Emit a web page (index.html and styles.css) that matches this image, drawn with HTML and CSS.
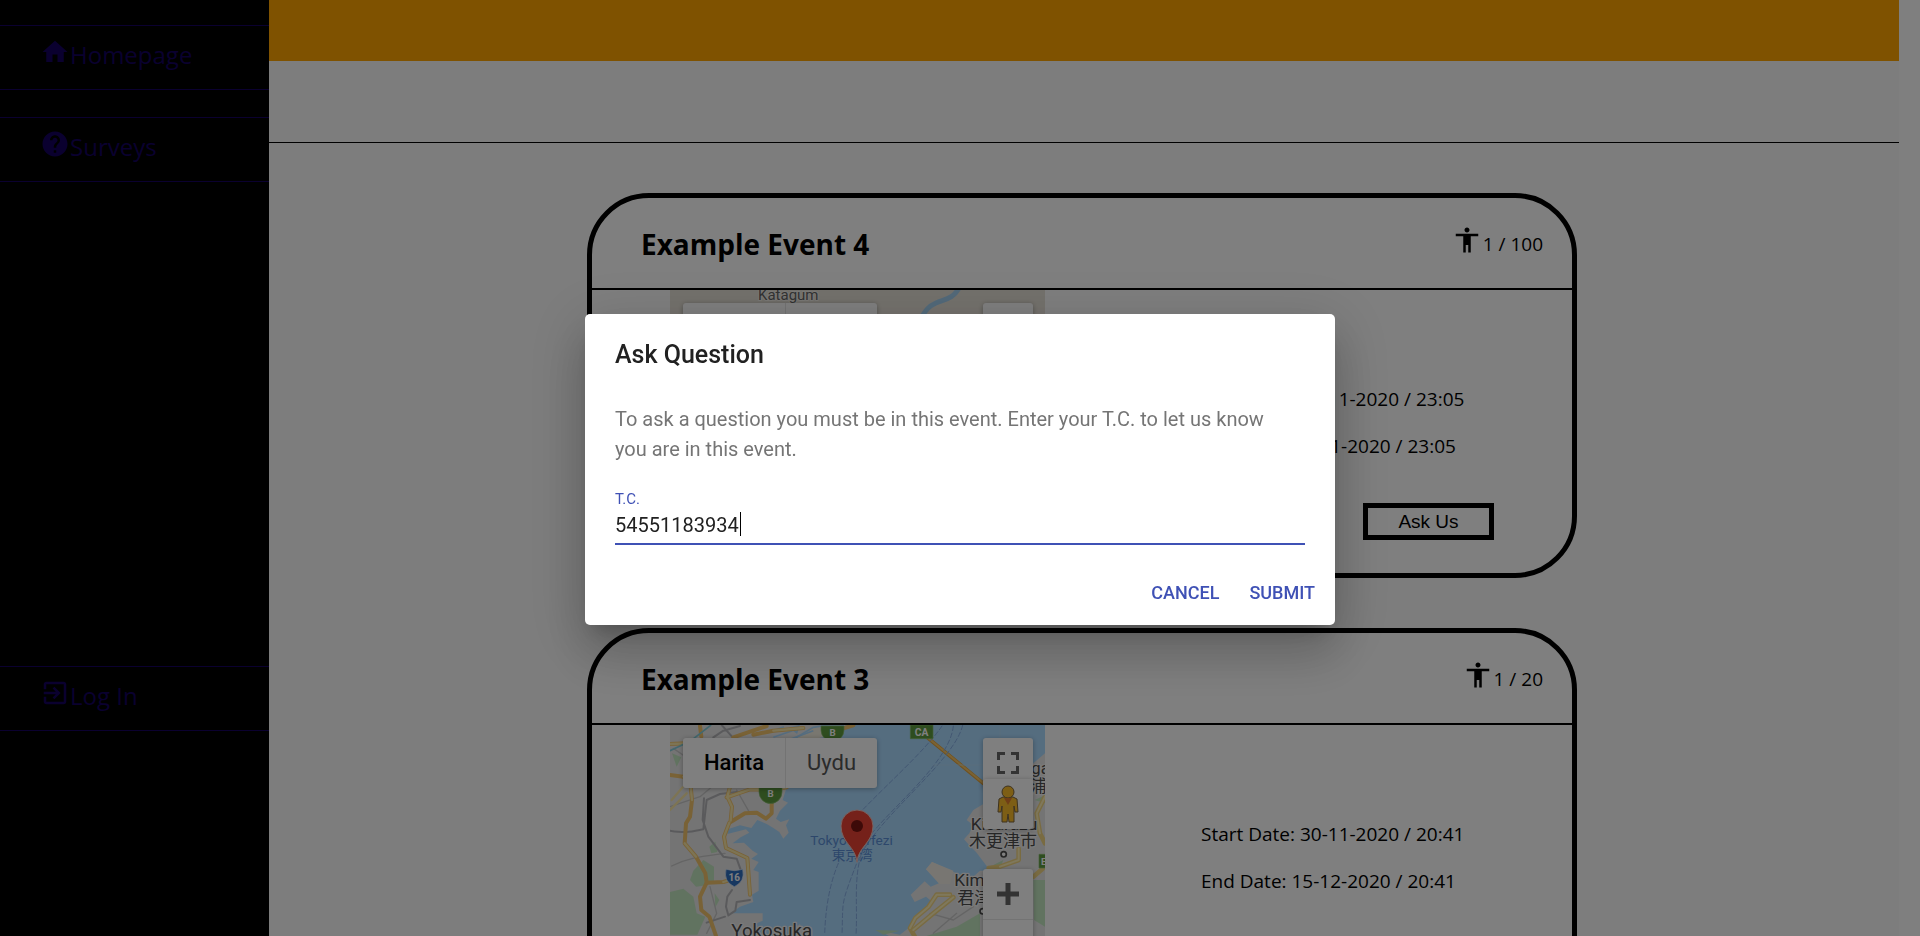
FILE: index.html
```html
<!DOCTYPE html>
<html lang="en">
<head>
<meta charset="utf-8">
<title>Events</title>
<link rel="stylesheet" href="styles.css">
</head>
<body>
<div class="app">
  <nav class="sidebar">
    <a class="nav-item" href="#home"><svg class="icon" viewBox="0 0 24 24"><path d="M10 20v-6h4v6h5v-8h3L12 3 2 12h3v8z"/></svg><span>Homepage</span></a>
    <a class="nav-item" href="#surveys"><svg class="icon" viewBox="0 0 24 24"><path d="M12 2C6.48 2 2 6.48 2 12s4.48 10 10 10 10-4.48 10-10S17.52 2 12 2zm1 17h-2v-2h2v2zm2.07-7.75l-.9.92C13.45 12.9 13 13.5 13 15h-2v-.5c0-1.1.45-2.1 1.17-2.83l1.24-1.26c.37-.36.59-.86.59-1.41 0-1.1-.9-2-2-2s-2 .9-2 2H8c0-2.21 1.79-4 4-4s4 1.79 4 4c0 .88-.36 1.68-.93 2.25z"/></svg><span>Surveys</span></a>
    <a class="nav-item nav-login" href="#login"><svg class="icon" viewBox="0 0 24 24"><path d="M10.09 15.59L11.5 17l5-5-5-5-1.41 1.41L12.67 11H3v2h9.67l-2.58 2.59zM19 3H5c-1.11 0-2 .9-2 2v4h2V5h14v14H5v-4H3v4c0 1.1.89 2 2 2h14c1.1 0 2-.9 2-2V5c0-1.1-.9-2-2-2z"/></svg><span>Log In</span></a>
  </nav>

  <div class="page">
    <header class="topbar"></header>
    <div class="toolbar"></div>
    <main class="events">

      <article class="card">
        <header class="card-head">
          <h2 class="card-title">Example Event 4</h2>
          <div class="quota"><svg class="icon" viewBox="0 0 24 24"><path d="M12 2c1.1 0 2 .9 2 2s-.9 2-2 2-2-.9-2-2 .9-2 2-2zm9 7h-6v13h-2v-6h-2v6H9V9H3V7h18v2z"/></svg><span>1 / 100</span></div>
        </header>
        <div class="card-body">
          <div class="map">
            <svg class="map-art" viewBox="0 0 375 283">
              <rect width="375" height="283" fill="#e9e4da"/>
              <path d="M289 -2C283 9 275 9 266 13S255 22 251 28S236 60 220 74" fill="none" stroke="#a6d4f5" stroke-width="5"/>
              <text class="place" x="88" y="10" font-size="15">Katagum</text>
            </svg>
            <div class="map-types"><button class="map-type map-type-on" type="button">Harita</button><button class="map-type" type="button">Uydu</button></div>
            <button class="map-tool tool-full" type="button" aria-label="Fullscreen"></button>
          </div>
          <div class="details">
            <p class="date">Start Date: 30-11-2020 / 23:05</p>
            <p class="date">End Date: 30-11-2020 / 23:05</p>
            <button class="ask" type="button">Ask Us</button>
          </div>
        </div>
      </article>

      <article class="card">
        <header class="card-head">
          <h2 class="card-title">Example Event 3</h2>
          <div class="quota"><svg class="icon" viewBox="0 0 24 24"><path d="M12 2c1.1 0 2 .9 2 2s-.9 2-2 2-2-.9-2-2 .9-2 2-2zm9 7h-6v13h-2v-6h-2v6H9V9H3V7h18v2z"/></svg><span>1 / 20</span></div>
        </header>
        <div class="card-body">
          <div class="map">
            <svg class="map-art" viewBox="90 75 1125 849">
              <rect x="90" y="75" width="1125" height="849" fill="#aadaff"/>
              <!-- west shore -->
              <path d="M90 75H620L590 88L560 104L500 112L470 135L450 200L440 262L428 300L444 308L420 332L408 356L422 366L448 358L438 376L446 398L430 416L418 396L400 384L380 372L352 360L334 384L300 376L264 388L262 402L318 388L328 398L302 412L278 430L312 428L338 452L354 462L334 476L356 486L340 510L356 516V572L336 584L340 606L300 620L272 640H368V662L345 672L360 690L352 708L390 702L400 720L440 730L455 690L480 672L492 702L500 760L520 924H90Z" fill="#e8e8e8"/>
              <path d="M440 130L520 82L566 75H610L560 112L500 124ZM470 98L452 84L476 78Z" fill="#f3eee0" stroke="#aadaff" stroke-width="5"/>
              <path d="M380 100L432 80M400 112L470 88M444 120L520 92" stroke="#aadaff" stroke-width="5"/>
              <!-- east shore -->
              <path d="M1215 160L1180 190L1130 205L1070 240L1030 312L1000 330L980 360L1000 376L988 400L972 418L990 438L1008 456L1040 498L1048 512H1020L1000 530L960 524L876 486L858 508L900 548L872 560L854 544L812 584L824 606L858 590L880 608L840 640L818 664L806 684L780 704L720 692L800 740L840 924H1215Z" fill="#e8e8e8"/>
              <path d="M876 486L940 512L930 552H898L858 508Z" fill="#f0ede4"/>
              <g fill="#c3e6c1">
                <path d="M160 512L190 480L222 500V542L200 556L168 560L150 540Z"/>
                <path d="M90 576L130 566L160 590L170 640L196 650L172 704H90Z"/>
                <path d="M140 210L162 190L168 215L150 240ZM208 440L226 425L232 456L214 460ZM96 160L124 172L110 200ZM224 580L238 600L226 622Z"/>
                <path d="M706 690L780 692L730 704ZM1180 540H1215V680L1182 660ZM1060 495L1090 480L1080 505ZM820 720L950 680L1020 640V924H850ZM1184 300L1215 286V310Z"/>
              </g>
              <g fill="none" stroke-linejoin="round" stroke-linecap="round">
                <g stroke="#c9c9c9" stroke-width="4">
                  <path d="M95 498C150 470 200 468 255 460M90 320L180 290L240 240M290 270L330 340M210 560L230 640L200 700M870 640L940 660L1000 620M880 700L950 640M100 145L180 200"/>
                </g>
                <g stroke="#b5b5b8" stroke-width="6">
                  <path d="M245 75L278 112L284 138M90 392C140 400 150 396 190 388L200 300L240 282L290 276M192 295L188 360L205 410L250 470L290 476L306 520M330 600L290 606L286 632L265 646L258 620L262 590L276 570M200 668L255 650M300 78L250 92L220 112"/>
                </g>
                <g stroke="#f3c46c" stroke-width="12">
                  <path d="M90 132L140 130M90 225L130 230L152 260L156 300L150 350L138 370L134 430L168 470L196 520L200 548L180 590L184 630L208 650L228 708"/>
                  <path d="M200 548L250 546L270 540M340 104L400 92L490 84M180 78L184 110M280 112L380 78M395 310V340L378 356L350 338L315 340L268 368L252 410L258 444L322 474L330 584"/>
                  <path d="M270 260L262 290L276 320L272 362M440 262L400 270L330 268L260 292M640 76L600 88"/>
                </g>
                <g stroke="#fbe9a8" stroke-width="7">
                  <path d="M90 132L140 130M130 230L152 260L156 300M134 430L168 470M250 546L270 540M268 368L252 410L258 444L322 474L330 584M270 260L262 290L276 320L272 362M440 262L400 270L330 268L260 292M400 92L490 84M90 330L140 280M95 300L128 262"/>
                </g>
                <path d="M865 115L1030 250" stroke="#e2a23c" stroke-width="11"/>
                <path d="M868 117L1030 249" stroke="#f7c768" stroke-width="6"/>
                <g stroke="#f3d683" stroke-width="14"><path d="M930 584H890L866 620L826 654L810 684L830 720M1215 290L1190 340L1200 400L1215 430M1136 446V480L1080 500L1046 504M940 592L880 640L820 690M1180 530L1215 500"/></g>
                <g stroke="#fff1b8" stroke-width="6"><path d="M930 584H890L866 620L826 654L810 684M1215 290L1190 340L1200 400M1136 446V480L1080 500M940 592L880 640L820 690"/></g>
                <path d="M90 152L150 124L212 76" stroke="#84cfdc" stroke-width="5"/>
                <g stroke="#86aee4" stroke-width="3" stroke-dasharray="14 8">
                  <path d="M906 78C850 160 720 270 630 370M968 76C940 190 700 360 650 490S610 600 606 704M940 78C930 180 770 310 700 395S655 600 648 704M595 490C565 560 556 640 554 704"/>
                </g>
                <path d="M1080 75V195H880" stroke="#b8dcf5" stroke-width="2"/>
              </g>
              <!-- road shields -->
              <g fill="#5d9a3f" stroke="#8abf6c" stroke-width="2">
                <path d="M543 78H612V90A34 34 0 0 1 543 90Z"/>
                <path d="M357 250H426V276A34 34 0 0 1 357 276Z"/>
                <path d="M811 75H879V116H811ZM1197 463H1230V504H1197Z"/>
              </g>
              <path d="M258 508Q283 516 308 508Q316 545 283 560Q250 545 258 508Z" fill="#2f6ec0" stroke="#dce8f7" stroke-width="2"/>
              <g class="shield">
                <text x="578" y="109" font-size="29">B</text>
                <text x="392" y="291" font-size="29">B</text>
                <text x="845" y="107" font-size="31">CA</text>
                <text x="1211" y="494" font-size="29">E</text>
                <text x="283" y="542" font-size="30">16</text>
              </g>
              <g class="bay"><text x="511" y="434" font-size="41">Tokyo Körfezi</text><text x="575" y="481" font-size="41">東京湾</text></g>
              <g class="town">
                <text x="992" y="389" font-size="52">Kisarazu</text><text x="987" y="440" font-size="51">木更津市</text>
                <text x="943" y="559" font-size="52">Kimitsu</text><text x="952" y="611" font-size="51">君津市</text>
                <text x="1174" y="223" font-size="50">gaura</text><text x="1170" y="276" font-size="50">浦市</text>
                <text x="274" y="710" font-size="56">Yokosuka</text>
              </g>
              <g fill="#fff" stroke="#4c4c4c" stroke-width="5"><circle cx="1091" cy="463" r="8"/><circle cx="1028" cy="634" r="8"/></g>
              <path d="M651 487C648 440 604 430 603 378A48 48 0 0 1 699 378C698 430 654 440 651 487Z" fill="#ea4335" stroke="#f4c4be" stroke-width="3"/>
              <circle cx="651" cy="378" r="18" fill="#7a1410"/>
            </svg>
            <div class="map-types"><button class="map-type map-type-on" type="button">Harita</button><button class="map-type" type="button">Uydu</button></div>
            <button class="map-tool tool-full" type="button" aria-label="Fullscreen"><svg class="tool-icon" viewBox="0 0 22 22"><path d="M1.500 8V1.500H8M14 1.500H20.500V8M20.500 14V20.500H14M8 20.500H1.500V14" fill="none" stroke="#666" stroke-width="3"/></svg></button>
            <button class="map-tool tool-man" type="button" aria-label="Street View"><svg class="man-icon" viewBox="0 0 22 38"><path d="M6 12L2 14L1 27H4L5 21V37H10L11 29L12 37H17V21L18 27H21L20 14L16 12Z" fill="#fbbc2b" stroke="#7a6440"/><circle cx="11" cy="7" r="6" fill="#fbbc2b" stroke="#7a6440"/><path d="M7 13H15L11 20Z" fill="#e07a2c"/></svg></button>
            <div class="zoom"><button class="zoom-btn" type="button" aria-label="Zoom in"><svg class="tool-icon" viewBox="0 0 22 22"><path d="M11 0V22M0 11H22" fill="none" stroke="#666" stroke-width="5"/></svg></button><button class="zoom-btn" type="button" aria-label="Zoom out"><svg class="tool-icon" viewBox="0 0 22 22"><path d="M0 11H22" fill="none" stroke="#666" stroke-width="5"/></svg></button></div>
          </div>
          <div class="details">
            <p class="date">Start Date: 30-11-2020 / 20:41</p>
            <p class="date">End Date: 15-12-2020 / 20:41</p>
            <button class="ask" type="button">Ask Us</button>
          </div>
        </div>
      </article>
    </main>
  </div>
</div>

<div class="backdrop">
  <form class="dialog" role="dialog" aria-labelledby="dialog-title">
    <h2 class="dialog-title" id="dialog-title">Ask Question</h2>
    <div class="dialog-content">
      <p class="dialog-text">To ask a question you must be in this event. Enter your T.C. to let us know you are in this event.</p>
      <label class="field-label" for="tc">T.C.</label>
      <div class="field"><input class="field-input" id="tc" type="text" value="54551183934"></div>
    </div>
    <div class="dialog-actions"><button class="action" type="button">CANCEL</button><button class="action" type="button">SUBMIT</button></div>
  </form>
</div>
</body>
</html>
```
FILE: styles.css
```css
* { box-sizing: border-box; }
body {
  margin: 0;
  height: 100vh;
  overflow: hidden;
  background: #fff;
  color: #000;
  font-family: "Open Sans", "Noto Sans", sans-serif;
  font-size: 19px;
}
h2, p { margin: 0; }
button { margin: 0; padding: 0; border: 0; background: none; }
.icon { width: 30px; height: 30px; flex: none; fill: currentColor; }

.app { display: flex; height: 100vh; overflow: hidden; padding-right: 21px; }

.sidebar {
  flex: none;
  width: 269px;
  display: flex;
  flex-direction: column;
  gap: 27px;
  padding: 25px 0 205px;
  background: #000;
}
.nav-item {
  display: flex;
  align-items: flex-start;
  padding: 11px 0 17px 40px;
  border: solid #14005f;
  border-width: 1px 0;
  color: #14005f;
  font-size: 24px;
  line-height: 35px;
  text-decoration: none;
}
.nav-login { margin-top: auto; }

.page { flex: 1; min-width: 0; background: #fafafa; }
.topbar { height: 61px; background: #ffa500; }
.toolbar { height: 82px; border-bottom: 1px solid #000; }
.events {
  display: flex;
  flex-direction: column;
  align-items: center;
  gap: 50px;
  padding: 50px 4px 50px 0;
}

.card {
  width: 990px;
  max-width: 100%;
  overflow: hidden;
  background: #fff;
  border: 5px solid #000;
  border-radius: 62px;
}
.card-head {
  display: flex;
  justify-content: space-between;
  padding: 27px 29px 25px 49px;
  border-bottom: 2px solid #000;
}
.card-title { font-size: 28px; line-height: 38px; font-weight: 700; }
.quota { display: flex; line-height: 38px; gap: 1px; }
.card-body { display: flex; justify-content: space-between; padding: 0 78px; }
.details {
  width: 293px;
  display: flex;
  flex-direction: column;
  justify-content: flex-end;
  padding-bottom: 33px;
}
.date { margin-bottom: 20px; line-height: 27px; white-space: nowrap; }
.ask {
  align-self: flex-end;
  width: 131px;
  margin-top: 23px;
  border: 5px solid #000;
  font: 19px/27px "Liberation Sans", sans-serif;
}

.map { position: relative; width: 375px; overflow: hidden; font-family: Roboto, "Noto Sans CJK JP", sans-serif; }
.map-art { display: block; width: 100%; }
.place { fill: #666; stroke: #f7f4ee; stroke-width: 2px; paint-order: stroke; }
.shield { fill: #fff; font-weight: 700; text-anchor: middle; }
.bay { fill: #5b8fd6; }
.town { fill: #4c4c4c; stroke: #f4f4f4; stroke-width: 8px; paint-order: stroke; stroke-linejoin: round; }
.map-types {
  position: absolute;
  top: 13px;
  left: 13px;
  display: flex;
  border-radius: 3px;
  background: #fff;
  box-shadow: 0 1px 5px rgba(0, 0, 0, .3);
}
.map-type {
  padding: 0 21px;
  color: #565656;
  font: 22px/50px Roboto, sans-serif;
  border-left: 1px solid #e6e6e6;
}
.map-type-on { color: #000; font-weight: 500; border-left: 0; }
.map-tool, .zoom {
  position: absolute;
  right: 12px;
  width: 50px;
  border-radius: 3px;
  background: #fff;
  box-shadow: 0 1px 5px rgba(0, 0, 0, .3);
}
.map-tool { display: grid; place-items: center; height: 50px; }
.tool-full { top: 13px; }
.tool-man { top: 54px; }
.zoom { top: 144px; }
.zoom-btn { display: grid; place-items: center; width: 50px; height: 50px; }
.zoom-btn + .zoom-btn { border-top: 1px solid #e6e6e6; }
.tool-icon { width: 22px; height: 22px; }
.man-icon { width: 22px; height: 38px; }

.backdrop {
  position: fixed;
  inset: 0;
  display: flex;
  align-items: center;
  justify-content: center;
  padding-top: 2px;
  background: rgba(0, 0, 0, .5);
  font-family: Roboto, sans-serif;
}
.dialog {
  width: 750px;
  border-radius: 5px;
  background: #fff;
  box-shadow: 0 14px 19px -9px rgba(0, 0, 0, .2), 0 30px 48px 4px rgba(0, 0, 0, .14), 0 11px 58px 10px rgba(0, 0, 0, .12);
}
.dialog-title { padding: 21px 30px 19px; color: #212121; font-size: 25px; line-height: 40px; font-weight: 500; }
.dialog-content { padding: 10px 30px; }
.dialog-text { max-width: 680px; margin-bottom: 25px; color: #757575; font-size: 20px; line-height: 30px; }
.field-label { display: block; color: #3f51b5; font-size: 15px; line-height: 20px; }
.field { position: relative; border-bottom: 2px solid #3f51b5; }
.field::after {
  content: "";
  position: absolute;
  top: 3px;
  left: 125px;
  width: 1px;
  height: 24px;
  background: #000;
}
.field-input {
  display: block;
  width: 100%;
  height: 34px;
  padding: 0 0 2px;
  border: 0;
  outline: 0;
  background: none;
  color: #212121;
  font: 20px Roboto, sans-serif;
}
.dialog-actions { display: flex; justify-content: flex-end; gap: 10px; padding: 15px 10px 10px; }
.action { padding: 0 10px; color: #3f51b5; font: 500 18px/45px Roboto, sans-serif; }
```
